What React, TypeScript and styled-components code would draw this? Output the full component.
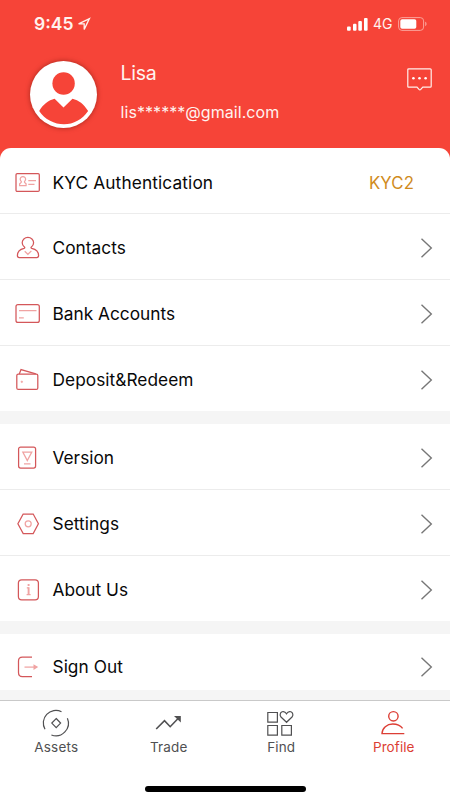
import React from "react";
import styled, { createGlobalStyle } from "styled-components";

const GlobalStyle = createGlobalStyle`
  * { box-sizing: border-box; }
  html, body { margin: 0; padding: 0; background: #f5f5f5; }
  body { font-family: Inter, "Liberation Sans", sans-serif; color: #080808; }
  svg { display: block; flex: none; overflow: visible; }
`;

const Screen = styled.div`
  width: 450px;
  height: 800px;
  display: flex;
  flex-direction: column;
  overflow: hidden;
  background: #f5f5f5;
`;

const Hero = styled.header`
  height: 160px;
  flex: none;
  background: #f64438;
  color: #fff3ef;
`;

const StatusBar = styled.div`
  height: 48px;
  padding: 0 23px 0 34px;
  display: flex;
  align-items: center;
`;

const Clock = styled.span`
  font-size: 17.5px;
  font-weight: 600;
  line-height: 20px;
  width: 44px;
  white-space: nowrap;
`;

const StatusIcons = styled.div`
  margin-left: auto;
  display: flex;
  align-items: center;
  gap: 5px;
`;

const Network = styled.span`
  font-size: 14px;
  line-height: 16px;
  width: 20px;
  white-space: nowrap;
`;

const Account = styled.div`
  display: flex;
  padding: 13px 18px 0 30px;
`;

const Avatar = styled.div`
  width: 67px;
  height: 67px;
  border-radius: 50%;
  background: #fff;
  box-shadow: 0 0 5px rgba(110, 20, 10, 0.6);
`;

const Identity = styled.div`
  margin: 0 0 0 23.5px;
  flex: 1;
  display: flex;
  flex-direction: column;
`;

const Name = styled.span`
  font-size: 19.5px;
  line-height: 24px;
  letter-spacing: -0.3px;
`;

const Email = styled.span`
  margin-top: 17px;
  font-size: 16px;
  line-height: 20px;
  letter-spacing: 0.07px;
`;

const MessageButton = styled.button`
  margin: 7px 0 0;
  padding: 0;
  border: 0;
  background: none;
  align-self: flex-start;
`;

const Menu = styled.main`
  flex: 1;
  margin-top: -12px;
  display: flex;
  flex-direction: column;
  gap: 13px;
`;

const Group = styled.section<{ $rounded?: boolean }>`
  background: #fff;
  border-radius: ${(p) => (p.$rounded ? "11px 11px 0 0" : "0")};
`;

const Row = styled.div<{ $height?: number; $top?: number }>`
  height: ${(p) => p.$height ?? 66}px;
  display: flex;
  align-items: center;
  padding: ${(p) => p.$top ?? 3}px 17px 0 15px;
  border-bottom: 1px solid #ececec;
  &:last-child { border-bottom: 0; }
`;

const RowIcon = styled.span`
  width: 26px;
  height: 26px;
  margin-right: 11.5px;
`;

const Label = styled.span<{ $tracking: number }>`
  font-size: 17.3px;
  line-height: 24px;
  letter-spacing: ${(p) => p.$tracking}px;
  white-space: nowrap;
  flex: 1;
`;

const Level = styled.span`
  font-size: 16.8px;
  letter-spacing: 0.1px;
  color: #d08b1d;
  margin-right: 19px;
`;

const TabBar = styled.nav`
  height: 100px;
  flex: none;
  border-top: 1px solid #c9c9c9;
  background: #fff;
  display: flex;
  flex-direction: column;
  align-items: center;
`;

const Tabs = styled.div`
  width: 100%;
  height: 85px;
  display: grid;
  grid-template-columns: repeat(4, 1fr);
`;

const Tab = styled.div<{ $active?: boolean }>`
  padding-top: 8px;
  display: flex;
  flex-direction: column;
  align-items: center;
  color: ${(p) => (p.$active ? "#dc3e35" : "#505052")};
`;

const TabLabel = styled.span<{ $tracking: number }>`
  margin-top: 2px;
  font-size: 13.5px;
  line-height: 16px;
  letter-spacing: ${(p) => p.$tracking}px;
`;

const HomeIndicator = styled.div`
  width: 161px;
  height: 5.5px;
  border-radius: 3px;
  background: #000;
`;

const DARK = "#d4575a";
const PALE = "#f0a3a2";

const icons: Record<string, React.ReactNode> = {
  id: (
    <>
      <rect x="1" y="3.6" width="23.3" height="17.8" rx="1.2" />
      <g stroke={PALE}>
        <path d="M6.3 11.4a2.7 2.7 0 1 1 3.2 0c-.2.9 0 1.2.6 1.5 1.1.5 1.3 1.6 1 2.8H4.6c-.3-1.2 0-2.3 1.1-2.8.6-.3.8-.6.6-1.5z" />
        <path d="M13.3 10.6H21M13.3 14.4H19.5" />
      </g>
    </>
  ),
  person: (
    <>
      <path d="M9.4 12.1C8 11 7.2 9.5 7.2 7.8c0-3.1 2.5-5.4 5.7-5.4s5.7 2.3 5.7 5.4c0 1.7-.8 3.2-2.2 4.3-.6.5-.5 1 .3 1.2 4.3.9 6.9 3.5 6.9 7.3 0 1.4-.5 2.1-1.9 2.1H4.3c-1.4 0-1.9-.7-1.9-2.1 0-3.8 2.5-6.4 6.7-7.3.8-.2.9-.7.3-1.2z" />
      <path stroke={PALE} d="m9.7 16.3 3.2 3 3.5-3.4" />
    </>
  ),
  card: (
    <>
      <rect x="1" y="3.6" width="23.3" height="17.8" rx="2" />
      <path stroke={PALE} d="M4 9.6h17.5M4 16.9h4.8" />
    </>
  ),
  wallet: (
    <>
      <rect x="1.8" y="7" width="21" height="15.4" rx="1.5" />
      <path d="M4.3 7 6 2.6l14.8 4.2" />
      <circle cx="6.8" cy="14.8" r=".8" fill={PALE} stroke={PALE} strokeWidth=".7" />
    </>
  ),
  version: (
    <>
      <rect x="3.6" y="2" width="17" height="21" rx="2" />
      <path stroke={PALE} d="M7.8 7h9l-4.5 8.6zM9 18.8h6.5" />
    </>
  ),
  settings: (
    <>
      <path d="m8.2 3-5.3 9.8 5.3 9.7h10l5.2-9.7L18.2 3z" />
      <circle cx="13.2" cy="12.8" r="3" stroke={PALE} />
    </>
  ),
  info: (
    <>
      <rect x="3.4" y="2.8" width="20" height="20" rx="3.3" />
      <path stroke={PALE} strokeWidth="1.9" d="M13.6 7v2M13.6 10.2V18" />
      <path stroke={PALE} d="M11.8 10.8h1.8M11.6 17.6h4" />
    </>
  ),
  exit: (
    <>
      <path d="M17 3.1H7.4c-2.5 0-3.9 1.5-3.9 3.9v11.5c0 2.6 1.4 4.2 3.9 4.2H17" />
      <path stroke={PALE} d="M9.5 13.1h12" />
      <path fill={PALE} stroke="none" d="m18.5 10.2 4.7 2.9-4.7 2.9z" />
    </>
  ),
};

type Item = {
  icon: string;
  label: string;
  tracking: number;
  level?: string;
  height?: number;
  top?: number;
};

const groups: Item[][] = [
  [
    { icon: "id", label: "KYC Authentication", tracking: 0.12, level: "KYC2", top: 4 },
    { icon: "person", label: "Contacts", tracking: 0.02 },
    { icon: "card", label: "Bank Accounts", tracking: 0 },
    { icon: "wallet", label: "Deposit&Redeem", tracking: 0.04, height: 65, top: 3 },
  ],
  [
    { icon: "version", label: "Version", tracking: 0, top: 2 },
    { icon: "settings", label: "Settings", tracking: 0.05, top: 2 },
    { icon: "info", label: "About Us", tracking: 0, height: 65, top: 2 },
  ],
  [{ icon: "exit", label: "Sign Out", tracking: 0.05, height: 56, top: 10 }],
];

const Chevron = () => (
  <svg width="13" height="20" viewBox="0 0 13 20" fill="none" stroke="#777" strokeWidth="1.4">
    <path d="m1.5.8 9.8 9.2-9.8 9.2" />
  </svg>
);

const MenuRow = ({ item }: { item: Item }) => (
  <Row $height={item.height} $top={item.top}>
    <RowIcon>
      <svg width="26" height="26" viewBox="0 0 26 26" fill="none" stroke={DARK} strokeWidth="1.25">
        {icons[item.icon]}
      </svg>
    </RowIcon>
    <Label $tracking={item.tracking}>{item.label}</Label>
    {item.level ? <Level>{item.level}</Level> : <Chevron />}
  </Row>
);

const tabs = [
  {
    label: "Assets",
    tracking: 0.2,
    art: (
      <>
        <path d="M3 20.3A12.6 12.6 0 0 1 19.5 2.7M25.4 9.3A12.6 12.6 0 0 1 9.4 26" />
        <path d="m14.2 9.5 4.4 4.6-4.4 4.6-4.4-4.6z" />
      </>
    ),
  },
  {
    label: "Trade",
    tracking: 0.2,
    art: (
      <>
        <path strokeWidth="1.6" d="m1.2 20 8.3-8.3 5.7 6L23.8 8.7" />
        <path fill="currentColor" stroke="none" d="M19 7h6.8v6.5z" />
      </>
    ),
  },
  {
    label: "Find",
    tracking: 0.1,
    art: (
      <>
        <path d="M.8 3.5h9.6v9.6H.8zM.8 16.5h9.6v9.6H.8zM14.8 16.5h9.6v9.6h-9.6z" />
        <path d="M19.5 13.3 14 8C12.5 6.2 13 3.6 15.1 2.8c1.8-.6 3.4.3 4.4 2 1-1.7 2.7-2.6 4.4-2 2.1.8 2.6 3.4 1.1 5.2z" />
      </>
    ),
  },
  {
    label: "Profile",
    tracking: 0.1,
    active: true,
    art: (
      <g strokeWidth="1.4">
        <circle cx="13.4" cy="7.3" r="4.7" />
        <path d="M24.3 24.6H2C2.2 18.9 7 15 12.7 15c3.9 0 7.8 1.5 9.9 4.4" />
      </g>
    ),
  },
];

export default function App() {
  return (
    <Screen>
      <GlobalStyle />
      <Hero>
        <StatusBar>
          <Clock>9:45</Clock>
          <svg width="12" height="12" viewBox="0 0 12 12" fill="none" stroke="#fff3ef" strokeWidth="1.3">
            <path d="M.6 5.8 11.4.6 6.2 11.4V5.8z" />
          </svg>
          <StatusIcons>
            <svg width="21" height="13" viewBox="0 0 21 13" fill="#fff">
              <rect y="8.5" width="3.7" height="4.3" rx="1" />
              <rect x="6" y="5.8" width="3.5" height="7" rx="1" />
              <rect x="11.3" y="3" width="3.6" height="9.8" rx="1" />
              <rect x="17" width="3.6" height="12.8" rx="1" />
            </svg>
            <Network>4G</Network>
            <svg width="29" height="14" viewBox="0 0 29 14" fill="none">
              <rect x=".6" y=".6" width="25" height="12.8" rx="3.3" stroke="#fba299" />
              <rect x="2.3" y="2.3" width="16" height="9.4" rx="1.8" fill="#fff" />
              <path d="M27.2 4.8c1.8.5 1.8 3.9 0 4.4z" fill="#fba299" />
            </svg>
          </StatusIcons>
        </StatusBar>
        <Account>
          <Avatar>
            <svg width="67" height="67" viewBox="0 0 67 67" fill="#f64438">
              <circle cx="33.6" cy="22.5" r="11.2" />
              <path d="M9.2 50C12.8 43.5 18.7 39 24.6 37.7L33.5 46.5l9-8.8C48.5 39 54.2 43.3 58.1 50 52.3 58.5 43.5 63.3 34 63.3S14.7 58.5 9.2 50z" />
            </svg>
          </Avatar>
          <Identity>
            <Name>Lisa</Name>
            <Email>lis******@gmail.com</Email>
          </Identity>
          <MessageButton aria-label="Messages">
            <svg width="25" height="23" viewBox="0 0 25 23" fill="none" stroke="#fff0ec" strokeWidth="1.2">
              <path d="M1.8.8h21.4c.7 0 1 .3 1 1v16.4c0 .7-.3 1-1 1h-7.4l-2 2.2c-.6.6-1.2.6-1.8 0l-2-2.2H1.8c-.7 0-1-.3-1-1V1.8c0-.7.3-1 1-1z" />
              <g fill="#fff" stroke="none">
                <circle cx="6.4" cy="10.3" r="1.3" />
                <circle cx="12.5" cy="10.3" r="1.3" />
                <circle cx="18.6" cy="10.3" r="1.3" />
              </g>
            </svg>
          </MessageButton>
        </Account>
      </Hero>
      <Menu>
        {groups.map((items, i) => (
          <Group key={i} $rounded={i === 0}>
            {items.map((item) => (
              <MenuRow key={item.label} item={item} />
            ))}
          </Group>
        ))}
      </Menu>
      <TabBar>
        <Tabs>
          {tabs.map((tab) => (
            <Tab key={tab.label} $active={tab.active}>
              <svg width="28" height="28" viewBox="0 0 28 28" fill="none" stroke="currentColor" strokeWidth="1.2">
                {tab.art}
              </svg>
              <TabLabel $tracking={tab.tracking}>{tab.label}</TabLabel>
            </Tab>
          ))}
        </Tabs>
        <HomeIndicator />
      </TabBar>
    </Screen>
  );
}
